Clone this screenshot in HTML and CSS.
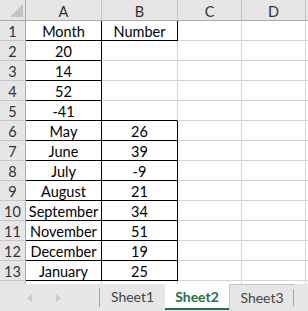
FILE: index.html
```html
<!DOCTYPE html>
<html lang="en">
<head>
  <meta charset="UTF-8">
  <title>Sheet2</title>
  <link rel="stylesheet" href="styles.css">
</head>
<body>

<div class="workbook">
  <div class="grid">
    <div class="corner">
      <svg width="13" height="13" viewBox="0 0 13 13"><polygon points="13,0 13,13 0,13" fill="#c4c4c4"/></svg>
    </div>
    <div class="colhead">A</div>
    <div class="colhead">B</div>
    <div class="colhead">C</div>
    <div class="colhead">D</div>
    <div class="colhead last"></div>

    <div class="rowhead">1</div>
    <div class="cell box">Month</div>
    <div class="cell box">Number</div>
    <div class="cell"></div><div class="cell"></div><div class="cell last"></div>

    <div class="rowhead">2</div>
    <div class="cell box">20</div>
    <div class="cell"></div>
    <div class="cell"></div><div class="cell"></div><div class="cell last"></div>

    <div class="rowhead">3</div>
    <div class="cell box">14</div>
    <div class="cell"></div>
    <div class="cell"></div><div class="cell"></div><div class="cell last"></div>

    <div class="rowhead">4</div>
    <div class="cell box">52</div>
    <div class="cell"></div>
    <div class="cell"></div><div class="cell"></div><div class="cell last"></div>

    <div class="rowhead">5</div>
    <div class="cell box">-41</div>
    <div class="cell under"></div>
    <div class="cell"></div><div class="cell"></div><div class="cell last"></div>

    <div class="rowhead">6</div>
    <div class="cell box">May</div>
    <div class="cell box">26</div>
    <div class="cell"></div><div class="cell"></div><div class="cell last"></div>

    <div class="rowhead">7</div>
    <div class="cell box">June</div>
    <div class="cell box">39</div>
    <div class="cell"></div><div class="cell"></div><div class="cell last"></div>

    <div class="rowhead">8</div>
    <div class="cell box">July</div>
    <div class="cell box">-9</div>
    <div class="cell"></div><div class="cell"></div><div class="cell last"></div>

    <div class="rowhead">9</div>
    <div class="cell box">August</div>
    <div class="cell box">21</div>
    <div class="cell"></div><div class="cell"></div><div class="cell last"></div>

    <div class="rowhead">10</div>
    <div class="cell box">September</div>
    <div class="cell box">34</div>
    <div class="cell"></div><div class="cell"></div><div class="cell last"></div>

    <div class="rowhead">11</div>
    <div class="cell box">November</div>
    <div class="cell box">51</div>
    <div class="cell"></div><div class="cell"></div><div class="cell last"></div>

    <div class="rowhead">12</div>
    <div class="cell box">December</div>
    <div class="cell box">19</div>
    <div class="cell"></div><div class="cell"></div><div class="cell last"></div>

    <div class="rowhead">13</div>
    <div class="cell box">January</div>
    <div class="cell box">25</div>
    <div class="cell"></div><div class="cell"></div><div class="cell last"></div>

    <div class="rowhead"></div>
    <div class="cell"></div><div class="cell"></div>
    <div class="cell"></div><div class="cell"></div><div class="cell last"></div>
  </div>

  <div class="tabs">
    <div class="nav">
      <svg width="5" height="8" viewBox="0 0 5 8"><polygon points="5,0 5,8 0,4" fill="#c8c8c8"/></svg>
      <svg width="5" height="8" viewBox="0 0 5 8"><polygon points="0,0 0,8 5,4" fill="#c8c8c8"/></svg>
    </div>
    <div class="tab">Sheet1</div>
    <div class="tab active">Sheet2</div>
    <div class="tab outlined">Sheet3</div>
  </div>
</div>

</body>
</html>
```

FILE: styles.css
```css
body {
  margin: 0;
  background: #ffffff;
  font-family: 'Lato', 'Liberation Sans', sans-serif;
  overflow: hidden;
}

.workbook {
  width: 308px;
  height: 311px;
  display: flex;
  flex-direction: column;
}

.grid {
  flex: 1;
  overflow: hidden;
  display: grid;
  grid-template-columns: 26px 76px 76px 64px 64px 1fr;
  grid-template-rows: 21px;
  grid-auto-rows: 20px;
  font-size: 14.5px;
}

.grid > div {
  box-sizing: border-box;
  border-right: 1px solid #d4d4d4;
  border-bottom: 1px solid #d4d4d4;
  display: flex;
  align-items: center;
  justify-content: center;
  padding-top: 2px;
}

.corner {
  background: #e6e6e6;
  align-items: flex-end !important;
  justify-content: flex-end !important;
  padding: 0 2px 3px 0 !important;
  border-right-color: #ababab !important;
  border-bottom-color: #ababab !important;
}

.colhead {
  background: #e6e6e6;
  color: #333333;
  border-right-color: #c6c6c6 !important;
  border-bottom-color: #ababab !important;
}

.rowhead {
  background: #e6e6e6;
  color: #333333;
  border-right-color: #ababab !important;
  border-bottom-color: #c6c6c6 !important;
}

.cell {
  color: #000000;
}

.grid > .box {
  border-right-color: #000000;
  border-bottom-color: #000000;
}

.grid > .under {
  border-bottom-color: #000000;
}

.grid > .last {
  border-right: none;
}

.tabs {
  height: 27px;
  flex-shrink: 0;
  background: #e6e6e6;
  display: flex;
  font-size: 14px;
  color: #444444;
}

.nav {
  width: 100px;
  display: flex;
  align-items: center;
  gap: 24px;
  padding-left: 27px;
  box-sizing: border-box;
  border-right: 1px solid #a6a6a6;
  margin: 4px 0 4px 0;
}

.tab {
  width: 65px;
  display: flex;
  align-items: center;
  justify-content: center;
  box-sizing: border-box;
  padding-bottom: 2px;
}

.tab.active {
  width: 64px;
  background: #ffffff;
  color: #217346;
  font-weight: bold;
  border-bottom: 2px solid #217346;
  margin-bottom: 1px;
  padding-bottom: 0;
}

.tab.outlined {
  border-top: 1px solid #c6c6c6;
  border-left: 1px solid #c6c6c6;
  position: relative;
}

.tab.outlined::after {
  content: '';
  position: absolute;
  right: 0;
  top: 4px;
  bottom: 5px;
  border-right: 1px solid #a6a6a6;
}
```
